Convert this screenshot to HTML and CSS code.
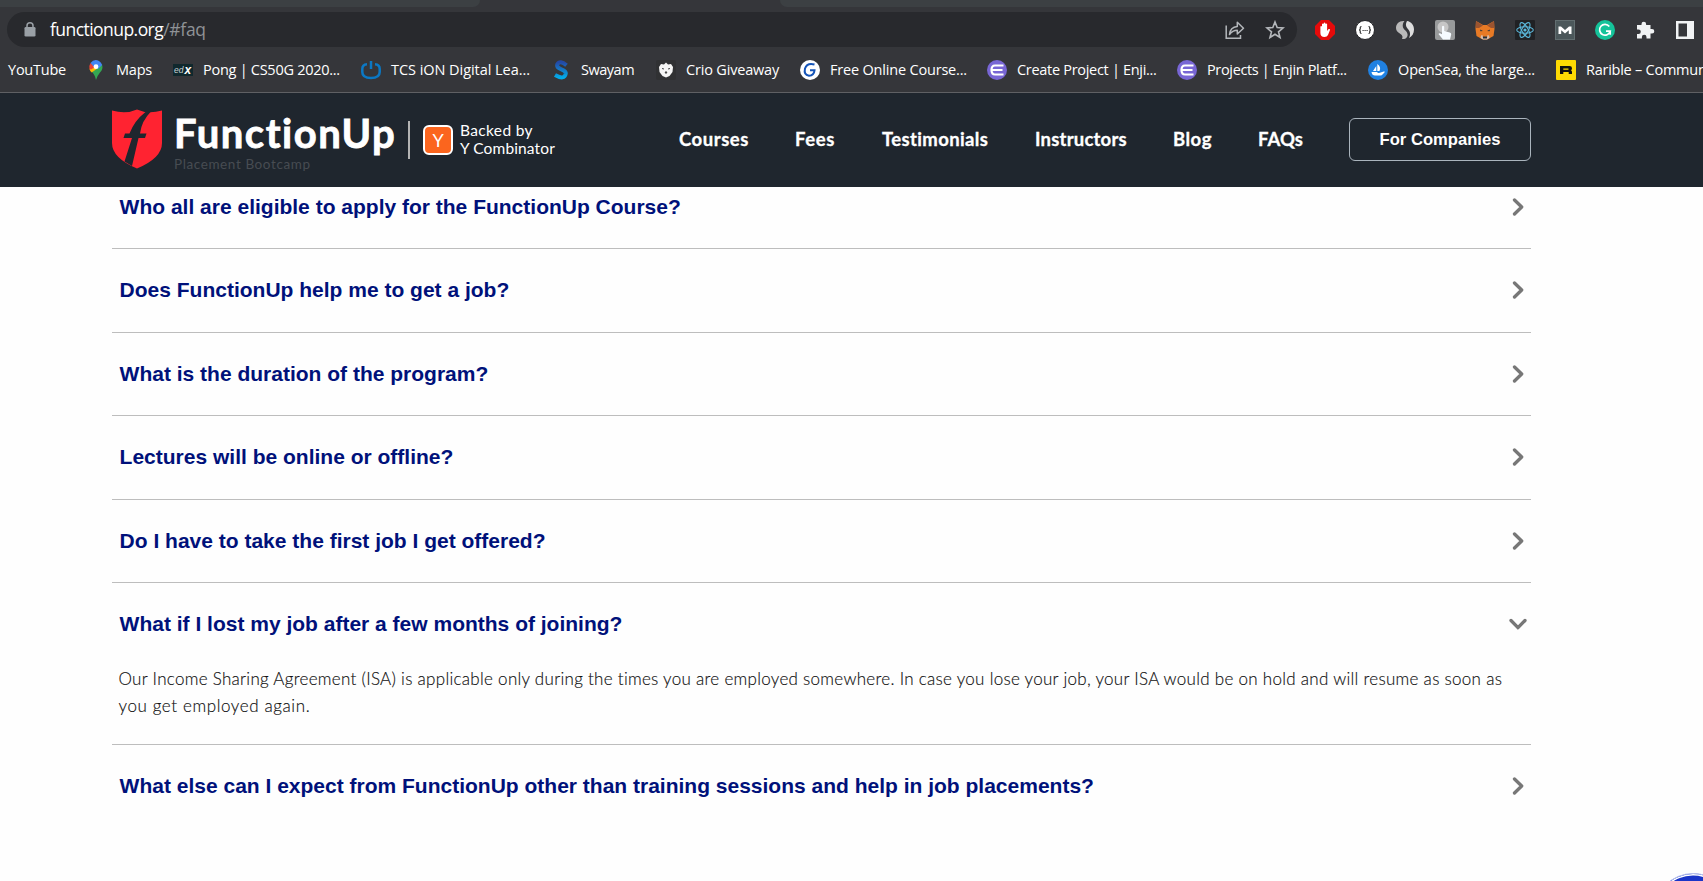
FILE: index.html
```html
<!DOCTYPE html>
<html lang="en">
<head>
<meta charset="utf-8">
<title>FunctionUp FAQ</title>
<link rel="stylesheet" href="styles.css">
</head>
<body>
<svg width="0" height="0" class="defs"><symbol id="chev" viewBox="0 0 18 18"><path d="M5.500 2L12.700 9L5.500 16" fill="none" stroke="#777" stroke-width="3.300" stroke-linecap="round" stroke-linejoin="round"/></symbol></svg>
<div class="browser">
  <div class="tabs"><div class="tab tab-left"></div><div class="tab tab-right"></div></div>
  <div class="toolbar">
    <div class="omnibox">
      <svg class="lock" width="12" height="15" viewBox="0 0 12 15"><rect x="0.5" y="5" width="11" height="9.5" rx="1.3" fill="#9aa0a6"/><path d="M3 6V3.800a3 3 0 0 1 6 0V6" fill="none" stroke="#9aa0a6" stroke-width="1.5"/></svg>
      <div class="url">functionup.org<span class="path">/#faq</span></div>
      <svg class="share" width="20" height="20" viewBox="0 0 20 20" fill="none" stroke="#b4b7bb" stroke-width="1.5"><path d="M1.200 5.500V18.200H15.500V15"/><path d="M4.500 14.500C5 9.500 8 6.800 12.300 6.500V2.300L18.500 8.200L12.300 14V10.200C8.500 10.200 6.500 11.500 4.500 14.500Z" stroke-linejoin="round"/></svg>
      <svg class="star" width="20" height="20" viewBox="0 0 20 20"><path d="M10 2L12.200 7.600L18 8L13.500 11.800L15 17.500L10 14.300L5 17.500L6.500 11.800L2 8L7.800 7.600Z" fill="none" stroke="#b4b7bb" stroke-width="1.6"/></svg>
    </div>
    <div class="extensions">
      <svg width="20" height="20" viewBox="0 0 20 20"><path d="M6 0h8l6 6v8l-6 6H6l-6-6V6Z" fill="#e60b0b"/><path d="M5.400 10.500V6.500q.8-1 1.600 0V9V4q.9-1 1.700 0V8.500V3q.9-1 1.700 0V8.500V4q.9-1 1.700 0V11l1.500-2q1.500-.3 1.500.7L13 15q-1 2-3.500 2Q5.400 17 5.400 13Z" fill="#fff"/></svg>
      <svg width="20" height="20" viewBox="0 0 20 20"><circle cx="10" cy="10" r="9.500" fill="#fff" stroke="#222326"/><path d="M6.500 6.500Q5 6.500 5.300 8.500Q5.300 10 4 10Q5.300 10 5.300 11.500Q5 13.500 6.500 13.500M13.500 6.500Q15 6.500 14.700 8.500Q14.700 10 16 10Q14.700 10 14.700 11.500Q15 13.500 13.500 13.500" fill="none" stroke="#333" stroke-width="1.200"/><path d="M7.500 10.500h1.200M9.500 10.500h1.200M11.500 10.500h1.200" stroke="#333"/></svg>
      <svg width="20" height="20" viewBox="0 0 20 20"><path d="M9.500 1C4 .5 1 4 1 8c0 3 2 4.500 4.500 6c2 1.300 2.500 3 1.500 5c4 .5 6-2 5.500-5C12 11 9 10 8 7.500C7.300 5 8 2.500 9.500 1Z" fill="#b9b9b9"/><path d="M12 1c4 .5 7 4 7 8.500c0 4-2 7-5 8.500c2-4 1-7-1.500-9.500C10.500 6 10.500 3.500 12 1Z" fill="#dedede"/></svg>
      <svg width="20" height="20" viewBox="0 0 20 20"><rect width="20" height="20" rx="2" fill="#989a9b"/><circle cx="8" cy="7" r="5.500" fill="#c6c6c6"/><path d="M7 6.500q1-1.500 2.200 0V11l5.500 1.500q1.800.5 1.500 2L15 19.500H8L3.500 14q.8-1.500 3.500.3Z" fill="#f6fbff"/></svg>
      <svg width="20" height="20" viewBox="0 0 20 20"><path d="M1 1L8 5H12L19 1L19.500 9L18.500 16L14 18.500L12 19.500H8L6 18.500L1.500 16L.5 9Z" fill="#e77a25"/><path d="M1 1L8 5.500L4 8L.7 8ZM19 1L12 5.500L16 8L19.300 8Z" fill="#9b5430"/><path d="M6 15.500L7.500 15L8 18H12L12.500 15L14 15.500L14.500 18L12 19.500H8L5.500 18Z" fill="#d5bfb2"/><path d="M5 9.500L8 11L5.500 11.300ZM15 9.500L12 11L14.500 11.300ZM8 16.500h4V18.500H8Z" fill="#25313c"/></svg>
      <svg width="20" height="20" viewBox="0 0 20 20"><rect width="20" height="20" rx="1" fill="#202124"/><g fill="none" stroke="#5bb8db" stroke-width="1.100"><ellipse cx="10" cy="10" rx="8.300" ry="3.200"/><ellipse cx="10" cy="10" rx="8.300" ry="3.200" transform="rotate(60 10 10)"/><ellipse cx="10" cy="10" rx="8.300" ry="3.200" transform="rotate(120 10 10)"/></g><circle cx="10" cy="10" r="1.600" fill="#5bb8db"/></svg>
      <svg width="20" height="20" viewBox="0 0 20 20"><rect x=".5" y=".5" width="19" height="19" fill="#4c585b" stroke="#626e70"/><path d="M3.500 14V6.500H6L10 10L14 6.500H16.500V14H13.800V10.300L10 13.500L6.200 10.300V14Z" fill="#fff"/></svg>
      <svg width="20" height="20" viewBox="0 0 20 20"><circle cx="10" cy="10" r="10" fill="#15c39a"/><path d="M14.300 6.500A5.400 5.400 0 1 0 15.200 11.200H11M15.200 10.500V14.700" fill="none" stroke="#fff" stroke-width="1.700"/></svg>
      <svg width="20" height="20" viewBox="0 0 20 20"><path d="M2 5H6.500V4a2.300 2.300 0 0 1 4.600 0V5H15.500V9H17a2.300 2.300 0 0 1 0 4.600H15.500V18.500H11.500V17a2.300 2.300 0 0 0-4.600 0V18.500H2V14H3.500a2.300 2.300 0 0 0 0-4.600H2Z" fill="#f1f3f4"/></svg>
      <svg width="20" height="20" viewBox="0 0 20 20"><path d="M1 1H19V19H1ZM3.500 3.500V16.500H12V3.500Z" fill="#f1f3f4" fill-rule="evenodd"/></svg>
    </div>
  </div>
  <div class="bookmarks">
    <div class="bm b0">YouTube</div>
    <div class="bm b1"><svg width="20" height="20" viewBox="0 0 20 20"><path d="M10 20Q9 14.500 5.500 11.500L10 7L16 4.500Q17.500 9 14 12.500Q11 16 10 20Z" fill="#34a853"/><path d="M3.500 9L8 4L12 8L5.700 12.500Q4 11 3.500 9Z" fill="#fbbc04"/><path d="M4.500 3L9 7L5 9.500L3.500 9Q2.800 5.500 4.500 3Z" fill="#ea4335"/><path d="M4.500 3Q8-1.500 13 .9Q15.300 2.200 16.200 5L12 9L8 7Z" fill="#4285f4"/><circle cx="10" cy="6.700" r="2.400" fill="#fff"/></svg>Maps</div>
    <div class="bm b2"><svg width="20" height="20" viewBox="0 0 20 20"><rect x="0" y="4" width="20" height="12" fill="#10282d"/><text x="1" y="12.500" class="edx-ed">ed</text><text x="11.500" y="14" class="edx-x">x</text></svg>Pong | CS50G 2020...</div>
    <div class="bm b3"><svg width="20" height="20" viewBox="0 0 20 20"><path d="M6 4.200Q1.300 4.500 1.300 9V12Q1.300 18 10 18T18.700 12V9Q18.700 4.500 14 4.200M10 1V9" fill="none" stroke="#0b78c4" stroke-width="2.500"/></svg>TCS iON Digital Lea...</div>
    <div class="bm b4"><svg width="20" height="20" viewBox="0 0 20 20"><defs><linearGradient id="sw" x1="0" y1="0" x2="0" y2="1"><stop stop-color="#2449a6"/><stop offset="1" stop-color="#03aae8"/></linearGradient></defs><path d="M15.500 5.300Q9-.2 6.200 4.500C4.500 10 15.500 8.500 14.800 13.500Q13.500 20.500 4 15" fill="none" stroke="url(#sw)" stroke-width="4"/></svg>Swayam</div>
    <div class="bm b5"><svg width="20" height="20" viewBox="0 0 20 20"><rect width="20" height="20" rx="2" fill="#303133"/><path d="M10 2.500L12 4.500L15 4L17 7L16.500 12L13.500 16L10 17.500L6.500 16L3.500 12L3 7L5 4L8 4.500Z" fill="#f5f5f5"/><path d="M6 8.500l2 .5M14 8.500l-2 .5M9 12h2L10 13.500Z" stroke="#444" fill="#444"/></svg>Crio Giveaway</div>
    <div class="bm b6"><svg width="20" height="20" viewBox="0 0 20 20"><circle cx="10" cy="10" r="10" fill="#fff"/><path d="M14.500 4.500Q7 2.500 5 8.500Q3.500 15 9 15.700Q14 15.500 14.500 10.300H10" fill="none" stroke="#1554b8" stroke-width="2"/></svg>Free Online Course...</div>
    <div class="bm b7"><svg width="20" height="20" viewBox="0 0 20 20"><circle cx="10" cy="10" r="10" fill="#7866d5"/><path d="M16.500 5.500H8Q4.500 5.500 4.500 10T8 14.500H16.500M5 10H15.500" fill="none" stroke="#fff" stroke-width="2.200"/></svg>Create Project | Enji...</div>
    <div class="bm b8"><svg width="20" height="20" viewBox="0 0 20 20"><circle cx="10" cy="10" r="10" fill="#7866d5"/><path d="M16.500 5.500H8Q4.500 5.500 4.500 10T8 14.500H16.500M5 10H15.500" fill="none" stroke="#fff" stroke-width="2.200"/></svg>Projects | Enjin Platf...</div>
    <div class="bm b9"><svg width="20" height="20" viewBox="0 0 20 20"><circle cx="10" cy="10" r="10" fill="#2081e2"/><path d="M9.300 4Q13.500 7 11.500 11H9.300ZM8.300 6V11H5ZM3.500 12H9.500V13H11L16.500 11.300V12.500L14.500 14.500Q14 15.500 12.500 15.500H7Q4 15.500 3.500 12Z" fill="#fff"/></svg>OpenSea, the large...</div>
    <div class="bm b10"><svg width="20" height="20" viewBox="0 0 20 20"><rect width="20" height="20" rx="1" fill="#feda03"/><path d="M4 6H13.500Q16 6 16 8.300Q16 9.800 15 10.200Q16 10.700 16 12V14H12.700V12H7.300V14H4ZM7.300 8.500V9.700H12.300Q13 9 12.300 8.500Z" fill="#111" fill-rule="evenodd"/></svg>Rarible – Commun</div>
  </div>
</div>

<header class="header">
  <svg class="shield" width="50" height="60" viewBox="0 0 50 60"><path d="M0 1.500Q14 5.500 25 .5Q36 5.500 50 1.500V34Q50 49 25 59.500Q0 49 0 34Z" fill="#ff2331"/><path d="M33.500 3L39 2.500Q29.500 12 28 24.500H34.500L33 29H26.500L20 57L12.500 52.500L20 29H11.500L13 24.500H17.500Q22.500 11.500 33.500 3Z" fill="#1f262e"/></svg>
  <div class="brand">
    <div class="brand-name">FunctionUp</div>
    <div class="brand-sub">Placement Bootcamp</div>
  </div>
  <div class="divider"></div>
  <div class="yc">Y</div>
  <div class="backed"><div class="by">Backed by</div><div>Y Combinator</div></div>
  <nav class="nav"><a class="n0">Courses</a><a class="n1">Fees</a><a class="n2">Testimonials</a><a class="n3">Instructors</a><a class="n4">Blog</a><a class="n5">FAQs</a></nav>
  <div class="button">For Companies</div>
</header>

<main class="faq">
  <div class="item first"><div class="q">Who all are eligible to apply for the FunctionUp Course?<svg class="chev"><use href="#chev"/></svg></div></div>
  <div class="item"><div class="q">Does FunctionUp help me to get a job?<svg class="chev"><use href="#chev"/></svg></div></div>
  <div class="item"><div class="q">What is the duration of the program?<svg class="chev"><use href="#chev"/></svg></div></div>
  <div class="item"><div class="q">Lectures will be online or offline?<svg class="chev"><use href="#chev"/></svg></div></div>
  <div class="item"><div class="q">Do I have to take the first job I get offered?<svg class="chev"><use href="#chev"/></svg></div></div>
  <div class="item open"><div class="q">What if I lost my job after a few months of joining?<svg class="chev down"><use href="#chev"/></svg></div>
    <p class="answer">Our Income Sharing Agreement (ISA) is applicable only during the times you are employed somewhere. In case you lose your job, your ISA would be on hold and will resume as soon as <span class="rest">you get employed again.</span></p></div>
  <div class="item last"><div class="q">What else can I expect from FunctionUp other than training sessions and help in job placements?<svg class="chev"><use href="#chev"/></svg></div></div>
</main>
<div class="chat-clip"><div class="chat"></div></div>
</body>
</html>
```
FILE: styles.css
```css
* { box-sizing: border-box; }
body { margin: 0; width: 1703px; height: 881px; overflow: hidden; position: relative; background: #fefefe; font-family: "Liberation Sans", sans-serif; }
svg { display: block; flex: none; }
.defs { position: absolute; }

.browser { height: 93px; background: #35363a; border-bottom: 1px solid #5f6064; overflow: hidden; }
.tabs { height: 7px; display: flex; justify-content: space-between; }
.tab { height: 7px; background: #3c4043; }
.tab-left { width: 480px; border-bottom-right-radius: 8px; }
.tab-right { width: 923px; border-bottom-left-radius: 8px; }
.toolbar { display: flex; height: 45px; padding: 5px 0 5px 7px; }
.omnibox { width: 1290px; height: 35px; border-radius: 18px; background: #28292d; display: flex; align-items: center; padding: 0 12px 0 17px; }
.lock { margin-right: 14px; }
.url { flex: 1; font: 17.500px "Open Sans", sans-serif; letter-spacing: -0.550px; color: #fff; white-space: nowrap; padding-bottom: 1px; }
.path { color: #8f9296; letter-spacing: -0.3px; }
.share { margin-right: 20px; }
.extensions { display: flex; align-items: center; gap: 20px; margin-left: 17.500px; }
.bookmarks { height: 36px; display: flex; align-items: center; color: #fff; font: 14.500px "Open Sans", sans-serif; white-space: nowrap; padding-bottom: 1px; }
.bm { display: flex; align-items: center; gap: 10px; flex: none; }
.b0 { width: 78px; margin-left: 8px; letter-spacing: -0.23px; }
.b1 { width: 87px; letter-spacing: -0.2px; }
.b2 { width: 188px; letter-spacing: -0.27px; }
.b3 { width: 190px; letter-spacing: -0.05px; }
.b4 { width: 105px; letter-spacing: -0.48px; }
.b5 { width: 144px; letter-spacing: -0.18px; }
.b6 { width: 187px; letter-spacing: -0.19px; }
.b7 { width: 190px; letter-spacing: -0.3px; }
.b8 { width: 191px; letter-spacing: -0.35px; }
.b9 { width: 188px; letter-spacing: -0.14px; }
.b10 { letter-spacing: -0.25px; }
.edx-ed { font: italic 8.500px "Liberation Sans", sans-serif; fill: #c8d3d5; letter-spacing: 0; }
.edx-x { font: italic bold 12px "Liberation Sans", sans-serif; fill: #fff; letter-spacing: 0; }

.header { height: 94px; background: #1f262e; display: flex; align-items: center; padding: 0 172px 2px 112px; color: #fff; }
.shield { margin-right: 12px; }
.brand { width: 234px; white-space: nowrap; padding-top: 5px; }
.brand-name { font: bold 40px/45px Lato, sans-serif; letter-spacing: 1.500px; -webkit-text-stroke: 0.800px #fff; }
.brand-sub { font: 13.500px/16px Lato, sans-serif; letter-spacing: 0.600px; color: #474c52; }
.divider { width: 2px; height: 38px; background: #b3b3b3; margin: 1px 13px 0 0; }
.yc { width: 30px; height: 30px; margin-top: 1px; border: 2px solid #fff; border-radius: 6px; background: #fb651e; text-align: center; font: 18px/27px Lato, sans-serif; }
.backed { margin-left: 7px; width: 219px; font: 15.500px/18px Lato, sans-serif; letter-spacing: 0.130px; white-space: nowrap; }
.by { letter-spacing: 0.360px; }
.nav { display: flex; flex: none; font: bold 18.500px Lato, sans-serif; -webkit-text-stroke: 0.300px #fff; }
.n0 { width: 116px; letter-spacing: 0.550px; }
.n1 { width: 87px; letter-spacing: 0.600px; }
.n2 { width: 153px; letter-spacing: 0.370px; }
.n3 { width: 138px; letter-spacing: 0.220px; }
.n4 { width: 85px; letter-spacing: 0.500px; }
.n5 { width: 91px; letter-spacing: 0.050px; }
.button { width: 182px; height: 43px; border: 1px solid #aab4bd; border-radius: 6px; text-align: center; font-weight: bold; font-size: 16.600px; line-height: 41px; flex: none; }

.faq { width: 1419px; margin-left: 112px; }
.item { height: 83.500px; border-bottom: 1px solid #bdbdbd; }
.first { height: 62px; }
.first .q { height: 40px; }
.open { height: 162px; }
.last { border: 0; }
.q { height: 82px; padding: 0 4.500px 0 7.600px; display: flex; align-items: center; justify-content: space-between; font-weight: bold; font-size: 21px; color: #00117a; white-space: nowrap; }
.chev { width: 18px; height: 18px; }
.down { transform: rotate(90deg); }
.answer { margin: 0; padding-left: 6.500px; width: 1400px; font: 300 17px/27px Lato, sans-serif; letter-spacing: 0.286px; color: #111; -webkit-text-stroke: 0.150px #111; }
.rest { letter-spacing: 0.600px; }
.chat-clip { position: absolute; right: 0; bottom: 0; width: 50px; height: 9px; overflow: hidden; }
.chat { margin: 1px 0 0 1px; width: 78px; height: 78px; border-radius: 50%; border: 1px solid #b8c2ee; background: #1a35c8; box-shadow: inset 0 0 0 1.500px #fff; }
```
